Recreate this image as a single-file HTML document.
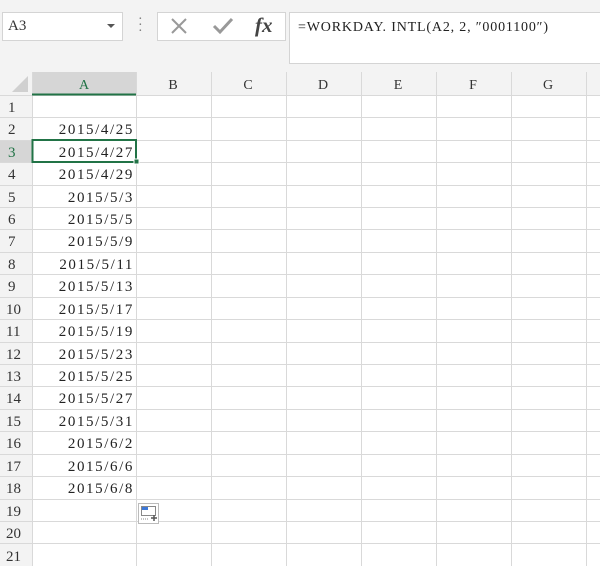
<!DOCTYPE html><html><head><style>
body{margin:0;width:600px;height:566px;background:#f3f3f3;font-family:"Liberation Serif","Noto Serif CJK SC",serif;overflow:hidden;position:relative}
.a{position:absolute}
.g{position:absolute;left:0;top:72px;width:600px;height:494px;background:#fff}
</style></head><body>
<div class="a" style="left:2px;top:12px;width:119px;height:27px;background:#fff;border:1px solid #d4d4d4"></div>
<div class="a" style="left:8px;top:18px;font-size:15px;color:#333">A3</div>
<div class="a" style="left:107px;top:24px;width:0;height:0;border-left:4px solid transparent;border-right:4px solid transparent;border-top:4px solid #555"></div>
<div class="a" style="left:138px;top:17px;color:#777;font-size:14px;line-height:6px">·<br>·<br>·</div>
<div class="a" style="left:157px;top:12px;width:127px;height:27px;background:#fff;border:1px solid #d4d4d4"></div>
<svg class="a" style="left:170px;top:17px" width="20" height="18"><path d="M2 2L16 16M16 2L2 16" stroke="#999" stroke-width="2"/></svg>
<svg class="a" style="left:212px;top:17px" width="24" height="18"><path d="M2 9L8 15L20 2" stroke="#999" stroke-width="3" fill="none"/></svg>
<div class="a" style="left:255px;top:13px;font-size:21px;font-style:italic;font-weight:bold;color:#444">fx</div>
<div class="a" style="left:289px;top:12px;width:311px;height:50px;background:#fff;border:1px solid #d4d4d4;border-right:none"></div>
<svg class="a" style="left:290px;top:13px" width="310" height="30"><text x="8" y="18" font-size="14" fill="#222" textLength="250" lengthAdjust="spacing" font-family="Liberation Serif,serif">=WORKDAY. INTL(A2, 2, ″0001100″)</text></svg>
<div class="g"></div>
<svg class="a" style="left:0;top:72px" width="600" height="494">
<rect x="0" y="0" width="600" height="23" fill="#f3f3f3"/>
<rect x="0" y="0" width="32" height="494" fill="#f3f3f3"/>
<rect x="32" y="0" width="104" height="23" fill="#d6d6d6"/>
<rect x="0" y="68" width="32" height="22" fill="#d6d6d6"/>
<path d="M28 4L28 20L12 20Z" fill="#d0d0d0"/>
<g stroke="#d9d9d9" stroke-width="1">
<path d="M32.5 0V494M136.5 0V494M211.5 0V494M286.5 0V494M361.5 0V494M436.5 0V494M511.5 0V494M586.5 0V494"/>
<path d="M0 23.5H600M0 45.5H600M0 68.5H600M0 90.5H600M0 113.5H600M0 135.5H600M0 157.5H600M0 180.5H600M0 202.5H600M0 225.5H600M0 247.5H600M0 270.5H600M0 292.5H600M0 314.5H600M0 337.5H600M0 359.5H600M0 382.5H600M0 404.5H600M0 427.5H600M0 449.5H600M0 471.5H600"/>
</g>
<rect x="32" y="21.5" width="104" height="2" fill="#217346"/>
<rect x="32.5" y="68" width="103.5" height="22" fill="none" stroke="#217346" stroke-width="2"/>
<rect x="134" y="87" width="5" height="5" fill="#217346" stroke="#fff"/>
<g font-size="14" fill="#333" text-anchor="middle" font-family="Liberation Serif,serif">
<text x="84" y="17" fill="#217346">A</text><text x="173" y="17">B</text><text x="248" y="17">C</text><text x="323" y="17">D</text><text x="398" y="17">E</text><text x="473" y="17">F</text><text x="548" y="17">G</text>
</g>
<g font-size="15" fill="#333" font-family="Liberation Serif,serif">
<text x="8" y="40">1</text><text x="8" y="62">2</text><text x="8" y="85" fill="#217346">3</text><text x="8" y="107">4</text><text x="8" y="130">5</text><text x="8" y="152">6</text><text x="8" y="174">7</text><text x="8" y="197">8</text><text x="8" y="219">9</text><text x="6" y="242">10</text><text x="6" y="264">11</text><text x="6" y="287">12</text><text x="6" y="309">13</text><text x="6" y="331">14</text><text x="6" y="354">15</text><text x="6" y="376">16</text><text x="6" y="399">17</text><text x="6" y="421">18</text><text x="6" y="444">19</text><text x="6" y="466">20</text><text x="6" y="489">21</text>
</g>
<g font-size="15" fill="#222" text-anchor="end" letter-spacing="1.6" font-family="Liberation Serif,serif">
<text x="134" y="62">2015/4/25</text><text x="134" y="85">2015/4/27</text><text x="134" y="107">2015/4/29</text><text x="134" y="130">2015/5/3</text><text x="134" y="152">2015/5/5</text><text x="134" y="174">2015/5/9</text><text x="134" y="197">2015/5/11</text><text x="134" y="219">2015/5/13</text><text x="134" y="242">2015/5/17</text><text x="134" y="264">2015/5/19</text><text x="134" y="287">2015/5/23</text><text x="134" y="309">2015/5/25</text><text x="134" y="331">2015/5/27</text><text x="134" y="354">2015/5/31</text><text x="134" y="376">2015/6/2</text><text x="134" y="399">2015/6/6</text><text x="134" y="421">2015/6/8</text>
</g>
<rect x="138.5" y="431.5" width="20" height="20" fill="#fff" stroke="#bbb"/>
<rect x="141" y="434" width="7" height="4" fill="#3c78d8"/>
<rect x="141.5" y="434.5" width="14" height="9" fill="none" stroke="#888"/>
<path d="M141 447H148" stroke="#888" stroke-dasharray="1 1"/>
<path d="M151 446H157M154 443V449" stroke="#555" stroke-width="1.5"/>
</svg>
</body></html>
